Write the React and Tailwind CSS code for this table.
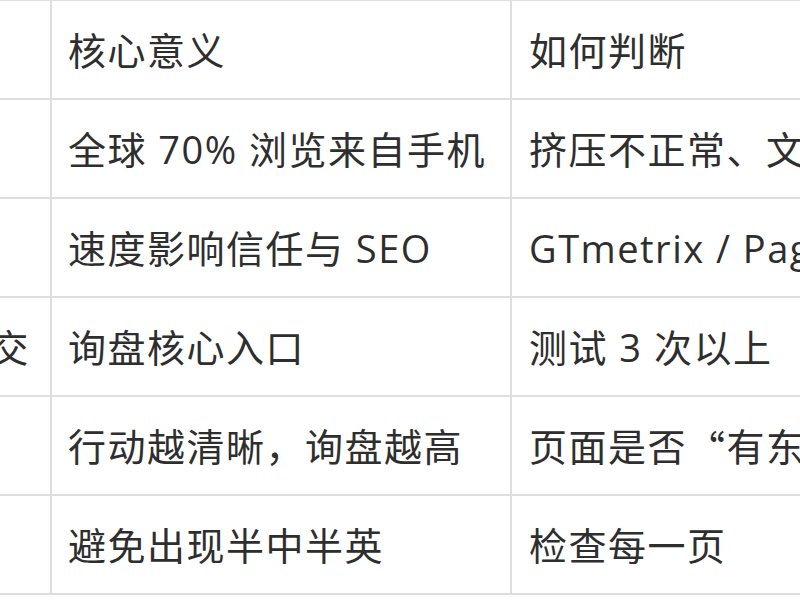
export default function App() {
  const q = (s) => (
    <span style={{ fontFamily: '"Noto Sans CJK SC", sans-serif' }}>{s}</span>
  );
  const rows = [
    ["", "核心意义", "如何判断"],
    ["", "全球 70% 浏览来自手机", "挤压不正常、文字过小、按钮难点"],
    ["", "速度影响信任与 SEO", "GTmetrix / PageSpeed"],
    ["表单提交", "询盘核心入口", "测试 3 次以上"],
    ["", "行动越清晰，询盘越高", <>页面是否 {q("“")}有东西可点{q("”")}</>],
    ["", "避免出现半中半英", "检查每一页"],
  ];
  return (
    <div
      className="w-[800px] h-[600px] overflow-hidden bg-white text-[#2e2e2e]"
      style={{ fontFamily: '"Open Sans", "Noto Sans CJK SC", sans-serif' }}
    >
      <div className="mt-[-1px] ml-[-200px] w-[1300px] border-t-2 border-[#dedede]">
        {rows.map((r, i) => (
          <div key={i} className="flex h-[99px] border-b-2 border-[#dedede]">
            <div className="w-[250px] shrink-0 flex items-center justify-end pr-[20px] pt-[2px] text-[38px] tracking-[1.5px] whitespace-nowrap">
              {r[0]}
            </div>
            <div className="w-[460px] shrink-0 border-l-2 border-[#dedede] flex items-center pl-[16px] pt-[2px] text-[38px] tracking-[1.5px] whitespace-nowrap">
              {r[1]}
            </div>
            <div className="flex-1 border-l-2 border-[#dedede] flex items-center pl-[17px] pt-[2px] text-[38px] tracking-[1.5px] whitespace-nowrap">
              {r[2]}
            </div>
          </div>
        ))}
      </div>
    </div>
  );
}
